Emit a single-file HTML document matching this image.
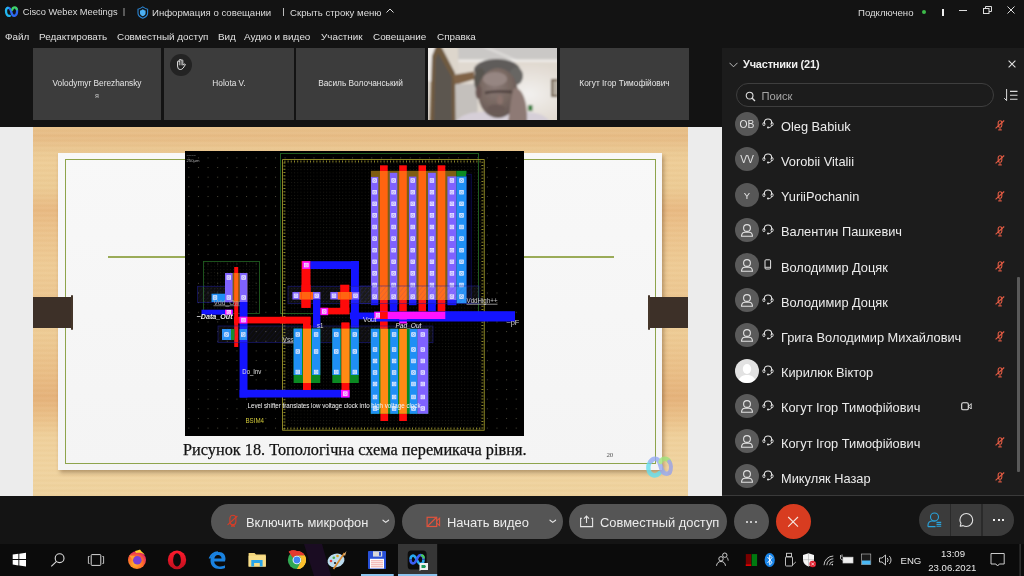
<!DOCTYPE html>
<html><head><meta charset="utf-8">
<style>
*{margin:0;padding:0;box-sizing:border-box}
html,body{will-change:transform;width:1024px;height:576px;overflow:hidden;background:#131313;font-family:"Liberation Sans",sans-serif;color:#e8e8e8}
.a{position:absolute;white-space:nowrap}
.t{font-size:9.6px;color:#dcdcdc;line-height:1}
.menu{font-size:9.9px;color:#e0e0e0;line-height:1}
.tile{position:absolute;top:48px;height:72px;background:#3c3c3c}
.tname{position:absolute;left:0;right:0;top:31px;text-align:center;font-size:8.3px;color:#e6e6e6;line-height:1}
.row{position:absolute;left:722px;width:302px;height:35px}
.av{position:absolute;left:13px;top:5px;width:24px;height:24px;border-radius:50%;background:#5b5b5b;color:#e0e0e0;font-size:10px;text-align:center;line-height:24px}
.nm{position:absolute;left:59px;top:10px;font-size:12.8px;color:#eaeaea;line-height:1;white-space:nowrap}
.btn{position:absolute;top:504px;height:35px;border-radius:18px;background:#555555}
.btxt{position:absolute;top:11px;font-size:12.9px;color:#ececec;line-height:1;white-space:nowrap}
</style></head>
<body>
<!-- title bar -->
<div class="a" style="left:0;top:0;width:1024px;height:48px;background:#131313"></div>
<svg class="a" style="left:4px;top:6px" width="16" height="12" viewBox="4 6 16 12"><path d="M7.6 7.9 C9.4 7.4 10.3 8.6 10.9 10.6 L11.8 13.6 C12.3 15.4 13.2 15.9 14.4 15.8" stroke="#2f6cf4" stroke-width="2.3" fill="none" stroke-linecap="round"/><path d="M14.4 15.8 C16.4 15.5 17.2 13 17.1 10.3 C17 9.3 16.7 8.7 16.2 8.4" stroke="#2d66f0" stroke-width="2.3" fill="none" stroke-linecap="round"/><path d="M12.2 9.8 C12.6 8 13.9 7.3 15.1 7.4 C16 7.5 16.6 8.2 16.8 9.3" stroke="#3ed46a" stroke-width="2.2" fill="none" stroke-linecap="round"/><path d="M9.8 15.8 C7.2 16.3 5.9 13.6 6 10.6 C6.1 8.9 6.8 8 7.8 7.8" stroke="#22b8f0" stroke-width="2.3" fill="none" stroke-linecap="round"/></svg>
<div class="a t" style="left:22.7px;top:8px;font-size:9.3px">Cisco Webex Meetings</div>
<div class="a" style="left:123px;top:8px;width:2px;height:8px;background:#585858"></div>
<svg class="a" style="left:137px;top:5.5px" width="12" height="13" viewBox="0 0 12 13"><path d="M5.8 0.9 C7.5 2.2 9.3 3 10.6 3.2 V7.2 C10.6 9.2 8.6 11.2 5.8 12.2 C3 11.2 1 9.2 1 7.2 V3.2 C2.3 3 4.1 2.2 5.8 0.9 Z" stroke="#2a86d6" stroke-width="1.1" fill="none"/><path d="M5.8 3.2 C6.9 4 8 4.5 8.6 4.6 V7.2 C8.6 8.5 7.4 9.6 5.8 10.2 C4.2 9.6 3 8.5 3 7.2 V4.6 C3.6 4.5 4.7 4 5.8 3.2 Z" fill="#4cb0f4"/></svg>
<div class="a t" style="left:152px;top:8px">Информация о совещании</div>
<div class="a" style="left:283px;top:8px;width:1px;height:8px;background:#bbb"></div>
<div class="a t" style="left:290px;top:8px">Скрыть строку меню</div>
<svg class="a" style="left:386px;top:8px" width="8" height="5" viewBox="0 0 8 5"><path d="M0.5 4.5 L4 1 L7.5 4.5" stroke="#ddd" stroke-width="1" fill="none"/></svg>
<div class="a t" style="left:858px;top:8px">Подключено</div>
<div class="a" style="left:922px;top:10px;width:4px;height:4px;border-radius:50%;background:#3dbb4a"></div>
<div class="a" style="left:942px;top:9px;width:2px;height:7px;background:#eee"></div>
<div class="a" style="left:959px;top:10px;width:8px;height:1px;background:#ddd"></div>
<svg class="a" style="left:983px;top:6px" width="9" height="8" viewBox="0 0 9 8"><rect x="0.5" y="2.5" width="5.5" height="5" fill="none" stroke="#ddd" stroke-width="1"/><path d="M2.5 2.5 V0.5 H8.5 V5.5 H6" fill="none" stroke="#ddd" stroke-width="1"/></svg>
<svg class="a" style="left:1007px;top:6.2px" width="8" height="8" viewBox="0 0 8 8"><path d="M0.5 0.5 L7.5 7.5 M7.5 0.5 L0.5 7.5" stroke="#ddd" stroke-width="1"/></svg>

<!-- menu -->
<div class="a menu" style="left:5px;top:32px">Файл</div>
<div class="a menu" style="left:39px;top:32px">Редактировать</div>
<div class="a menu" style="left:117px;top:32px">Совместный доступ</div>
<div class="a menu" style="left:218px;top:32px">Вид</div>
<div class="a menu" style="left:244px;top:32px">Аудио и видео</div>
<div class="a menu" style="left:321px;top:32px">Участник</div>
<div class="a menu" style="left:373px;top:32px">Совещание</div>
<div class="a menu" style="left:437px;top:32px">Справка</div>

<!-- tiles -->
<div class="tile" style="left:33px;width:128px"><div class="tname">Volodymyr Berezhansky</div><div class="tname" style="top:44px;font-size:7.2px;color:#c8c8c8">я</div></div>
<div class="tile" style="left:164px;width:130px"><div class="tname">Holota V.</div>
  <div class="a" style="left:6.2px;top:5.9px;width:21.8px;height:21.8px;border-radius:50%;background:#232323"></div>
  <svg class="a" style="left:11.5px;top:11.4px" width="10" height="11" viewBox="0 0 10 11"><path d="M1.5 7 V3 Q1.5 2 2.4 2 Q3.3 2 3.3 3 V1.2 Q3.3 0.4 4.2 0.4 Q5.1 0.4 5.1 1.2 V1.5 Q5.1 0.8 5.95 0.8 Q6.8 0.8 6.8 1.6 V6.2 L8 5.2 Q9.2 4.5 9.4 5.6 L7.2 9 Q6 10.6 4.2 10.6 Q1.5 10.6 1.5 7 Z" stroke="#e2e2e2" stroke-width="0.95" fill="none" stroke-linejoin="round"/><path d="M3.3 3 V6.3 M5.1 1.5 V6.3" stroke="#e2e2e2" stroke-width="0.8"/></svg>
</div>
<div class="tile" style="left:296px;width:129px"><div class="tname">Василь Волочанський</div></div>
<svg class="a" style="left:428px;top:48px" width="129" height="72" viewBox="0 0 129 72">
<defs><filter id="bl" x="0" y="0" width="100%" height="100%"><feGaussianBlur stdDeviation="0.9"/></filter>
<radialGradient id="face" cx="0.42" cy="0.35" r="0.7"><stop offset="0" stop-color="#8a7a76"/><stop offset="0.6" stop-color="#76665f"/><stop offset="1" stop-color="#615452"/></radialGradient>
<radialGradient id="wall" cx="0.7" cy="0.55" r="0.5"><stop offset="0" stop-color="#f2f0ee"/><stop offset="1" stop-color="#e0d9d0"/></radialGradient>
</defs>
<rect x="0" y="0" width="129" height="72" fill="#d6d0c8"/>
<g filter="url(#bl)">
<rect x="28" y="12" width="103" height="62" fill="url(#wall)"/>
<rect x="-2" y="-2" width="133" height="14" fill="#cac8c6"/>
<path d="M52 -2 L58 -2 L90 12 L84 12 Z" fill="#dcdad8"/>
<rect x="30" y="11.5" width="101" height="2.5" fill="#eeebe8"/>
<rect x="-2" y="-2" width="12" height="35" fill="#eeebe8"/>
<path d="M12 -2 L30 -2 L31 28 L25 28 Z" fill="#ddd6cc"/>
<path d="M2 74 L4 8 L8 -2 L13 -2 L27 25 L28 74 Z" fill="#705a40"/>
<path d="M6 74 L7.5 12 L10 5 L23.5 29 L24 74 Z" fill="#5c5650"/>
<path d="M25 27 L46 23.5 L47 31 L27 37 Z" fill="#806446"/>
<rect x="27.5" y="36" width="22" height="38" fill="#c4c0bc"/>
<rect x="123" y="31" width="7" height="18" fill="#6e5c44"/>
<rect x="125" y="33" width="5" height="14" fill="#b4aca0"/>
<path d="M28 74 C32 67 42 64 55 64 L100 64 C112 65 118 68 122 74 Z" fill="#d6cfd8"/>
<ellipse cx="69" cy="22" rx="23" ry="11" fill="#5e5c5a"/>
<ellipse cx="88" cy="28" rx="7" ry="9" fill="#686664"/>
<ellipse cx="52" cy="32" rx="6" ry="12" fill="#58544f"/>
<ellipse cx="70" cy="45" rx="20" ry="25" fill="url(#face)"/>
<ellipse cx="67" cy="31" rx="12" ry="7" fill="#968682"/>
<ellipse cx="50.5" cy="44" rx="3" ry="7" fill="#6a5652"/>
<path d="M57 45 C63 43 73 43 84 44" stroke="#4a3c3a" stroke-width="2.4" fill="none"/>
<ellipse cx="72" cy="52" rx="3" ry="5" fill="#8a726c"/>
<ellipse cx="68" cy="61" rx="9" ry="4.5" fill="#6a5a56"/>
<path d="M86 40 C93 39 100 50 99 74 L80 74 C82 64 82 52 86 40 Z" fill="#8e7a74"/>
<rect x="100" y="57" width="4.5" height="6" fill="#3a8040"/>
</g>
</svg>
<div class="tile" style="left:560px;width:129px"><div class="tname">Когут Ігор Тимофійович</div></div>

<!-- slide area -->
<div class="a" style="left:0;top:127px;width:722px;height:369px;background:#ececec"></div>
<div class="a" style="left:33px;top:127px;width:655px;height:369px;background:repeating-linear-gradient(180deg,rgba(255,255,255,0.03) 0px,rgba(255,255,255,0.03) 2px,rgba(160,100,40,0.03) 3px,rgba(160,100,40,0.0) 5px),linear-gradient(180deg,#e8c28c 0px,#e6bb84 9px,#e8c08a 15px,#ebc993 25px,#eecd97 35px,#eccb94 60px,#e8b982 83px,#ebc18a 100px,#eecb95 140px,#ecc690 170px,#eecd97 200px,#e9bd85 247px,#e5b27a 270px,#eac088 290px,#efd09b 310px,#f0d39f 340px,#eed29d 368px)"></div>
<div class="a" style="left:58px;top:153px;width:604px;height:317px;background:linear-gradient(180deg,#f8f8f8,#f4f4f4);box-shadow:2px 3px 4px rgba(80,50,20,.35)"></div>
<div class="a" style="left:64.8px;top:159px;width:591px;height:304.5px;border:1.5px solid #8ea44c"></div>
<div class="a" style="left:108px;top:256px;width:78px;height:2px;background:#9aab58"></div>
<div class="a" style="left:524px;top:256px;width:90px;height:2px;background:#9aab58"></div>
<div class="a" style="left:33px;top:297px;width:40px;height:31px;background:#3d3028"></div><div class="a" style="left:71px;top:295px;width:2.4px;height:35px;border-radius:1.2px;background:#45362a"></div>
<div class="a" style="left:648px;top:297px;width:40px;height:31px;background:#3d3028"></div><div class="a" style="left:647.6px;top:295px;width:2.4px;height:35px;border-radius:1.2px;background:#45362a"></div>
<svg class="a" style="left:185px;top:151px" width="339" height="285" viewBox="185 151 339 285"><defs>
<pattern id="gd" x="188.3" y="157.4" width="9.63" height="9.65" patternUnits="userSpaceOnUse"><rect x="0" y="0" width="1" height="1" fill="#4a4738"/></pattern>
<pattern id="gf" x="284.5" y="166" width="3.21" height="3.216" patternUnits="userSpaceOnUse"><rect x="0" y="0" width="0.9" height="0.9" fill="#1c1b15"/></pattern>
<pattern id="hat" width="3.5" height="3.5" patternUnits="userSpaceOnUse" patternTransform="rotate(40)"><rect width="3.5" height="3.5" fill="rgba(255,255,255,0.05)"/><rect width="0.9" height="3.5" fill="rgba(40,40,170,0.11)"/></pattern>
<g id="ct"><rect x="0.2" y="0.2" width="3.6" height="3.6" fill="rgba(255,255,255,0.35)" stroke="#ececff" stroke-width="0.8"/><path d="M0.8 0.8 L3.2 3.2 M3.2 0.8 L0.8 3.2" stroke="#f0f0ff" stroke-width="0.6"/></g>
</defs><rect x="185" y="151" width="339" height="285" fill="#000"/><rect x="185" y="151" width="339" height="285" fill="url(#gd)"/><rect x="284" y="162" width="198" height="266" fill="#000"/><rect x="284" y="162" width="198" height="266" fill="url(#gf)"/><rect x="280.5" y="153.5" width="198" height="160" fill="none" stroke="#1f5a1f" stroke-width="1"/><rect x="282.6" y="159.6" width="201.6" height="270.6" fill="none" stroke="#b0a830" stroke-width="0.8"/><rect x="284.4" y="161.4" width="198" height="267" fill="none" stroke="#8a8428" stroke-width="2" stroke-dasharray="1 2.2"/><rect x="370.9" y="170.8" width="85.5" height="129.2" fill="#7e5e12" /><rect x="456.4" y="170.8" width="10.1" height="5.6" fill="#0b8a22" /><rect x="466.5" y="174.3" width="4.8" height="129.1" fill="#020214" stroke="#0c0c50" stroke-width="0.8"/><rect x="380.0" y="165.3" width="7.7" height="5.7" fill="#ff0a0a" /><rect x="380.0" y="171.0" width="7.7" height="129.0" fill="#ff6410" /><rect x="399.2" y="165.3" width="7.6" height="5.7" fill="#ff0a0a" /><rect x="399.2" y="171.0" width="7.6" height="129.0" fill="#ff6410" /><rect x="418.5" y="165.3" width="7.5" height="5.7" fill="#ff0a0a" /><rect x="418.5" y="171.0" width="7.5" height="129.0" fill="#ff6410" /><rect x="437.6" y="165.3" width="7.7" height="5.7" fill="#ff0a0a" /><rect x="437.6" y="171.0" width="7.7" height="129.0" fill="#ff6410" /><rect x="370.9" y="176.9" width="7.4" height="123.1" fill="#7f62ff" /><rect x="389.8" y="172.8" width="7.5" height="127.2" fill="#7f62ff" /><rect x="409.0" y="176.6" width="7.4" height="123.4" fill="#7f62ff" /><rect x="428.0" y="172.8" width="7.8" height="127.2" fill="#7f62ff" /><rect x="447.4" y="176.4" width="9.0" height="123.6" fill="#7f62ff" /><rect x="456.4" y="176.4" width="10.1" height="127.0" fill="#1f8ff5" /><use href="#ct" x="372.6" y="178.5"/><use href="#ct" x="372.6" y="190.2"/><use href="#ct" x="372.6" y="201.8"/><use href="#ct" x="372.6" y="213.4"/><use href="#ct" x="372.6" y="225.0"/><use href="#ct" x="372.6" y="236.6"/><use href="#ct" x="372.6" y="248.2"/><use href="#ct" x="372.6" y="259.8"/><use href="#ct" x="372.6" y="271.4"/><use href="#ct" x="372.6" y="283.0"/><use href="#ct" x="372.6" y="294.6"/><use href="#ct" x="391.6" y="178.5"/><use href="#ct" x="391.6" y="190.2"/><use href="#ct" x="391.6" y="201.8"/><use href="#ct" x="391.6" y="213.4"/><use href="#ct" x="391.6" y="225.0"/><use href="#ct" x="391.6" y="236.6"/><use href="#ct" x="391.6" y="248.2"/><use href="#ct" x="391.6" y="259.8"/><use href="#ct" x="391.6" y="271.4"/><use href="#ct" x="391.6" y="283.0"/><use href="#ct" x="391.6" y="294.6"/><use href="#ct" x="410.7" y="178.5"/><use href="#ct" x="410.7" y="190.2"/><use href="#ct" x="410.7" y="201.8"/><use href="#ct" x="410.7" y="213.4"/><use href="#ct" x="410.7" y="225.0"/><use href="#ct" x="410.7" y="236.6"/><use href="#ct" x="410.7" y="248.2"/><use href="#ct" x="410.7" y="259.8"/><use href="#ct" x="410.7" y="271.4"/><use href="#ct" x="410.7" y="283.0"/><use href="#ct" x="410.7" y="294.6"/><use href="#ct" x="429.9" y="178.5"/><use href="#ct" x="429.9" y="190.2"/><use href="#ct" x="429.9" y="201.8"/><use href="#ct" x="429.9" y="213.4"/><use href="#ct" x="429.9" y="225.0"/><use href="#ct" x="429.9" y="236.6"/><use href="#ct" x="429.9" y="248.2"/><use href="#ct" x="429.9" y="259.8"/><use href="#ct" x="429.9" y="271.4"/><use href="#ct" x="429.9" y="283.0"/><use href="#ct" x="429.9" y="294.6"/><use href="#ct" x="449.9" y="178.5"/><use href="#ct" x="449.9" y="190.2"/><use href="#ct" x="449.9" y="201.8"/><use href="#ct" x="449.9" y="213.4"/><use href="#ct" x="449.9" y="225.0"/><use href="#ct" x="449.9" y="236.6"/><use href="#ct" x="449.9" y="248.2"/><use href="#ct" x="449.9" y="259.8"/><use href="#ct" x="449.9" y="271.4"/><use href="#ct" x="449.9" y="283.0"/><use href="#ct" x="449.9" y="294.6"/><use href="#ct" x="459.5" y="178.5"/><use href="#ct" x="459.5" y="190.2"/><use href="#ct" x="459.5" y="201.8"/><use href="#ct" x="459.5" y="213.4"/><use href="#ct" x="459.5" y="225.0"/><use href="#ct" x="459.5" y="236.6"/><use href="#ct" x="459.5" y="248.2"/><use href="#ct" x="459.5" y="259.8"/><use href="#ct" x="459.5" y="271.4"/><use href="#ct" x="459.5" y="283.0"/><use href="#ct" x="459.5" y="294.6"/><rect x="370.9" y="300.0" width="7.4" height="5.2" fill="#1414ff" /><rect x="389.8" y="300.0" width="7.5" height="5.2" fill="#1414ff" /><rect x="409.0" y="300.0" width="7.4" height="5.2" fill="#1414ff" /><rect x="428.0" y="300.0" width="7.8" height="5.2" fill="#1414ff" /><rect x="447.4" y="300.0" width="9.0" height="5.2" fill="#1414ff" /><rect x="389.8" y="300.0" width="7.5" height="11.2" fill="#1414ff" /><rect x="428.0" y="300.0" width="7.8" height="11.2" fill="#1414ff" /><rect x="380.0" y="300.0" width="7.7" height="30.0" fill="#ff0a0a" /><rect x="399.2" y="300.0" width="7.6" height="11.5" fill="#ff0a0a" /><rect x="418.5" y="300.0" width="7.5" height="11.5" fill="#ff0a0a" /><rect x="437.6" y="300.0" width="7.7" height="11.5" fill="#ff0a0a" /><rect x="350.0" y="312.5" width="24.2" height="6.8" fill="#1414ff" /><rect x="374.2" y="311.7" width="70.8" height="9.0" fill="#1414ff" /><rect x="445.0" y="311.2" width="70.0" height="9.5" fill="#1414ff" /><rect x="374.2" y="311.7" width="71.1" height="7.3" fill="#ff12ff" /><use href="#ct" x="376.0" y="313.3"/><rect x="380.0" y="311.7" width="7.7" height="7.3" fill="#ff0a0a" /><rect x="360.0" y="286.0" width="119.0" height="17.6" fill="url(#hat)" stroke="rgba(30,30,160,0.6)" stroke-width="0.8"/><rect x="203.5" y="261.5" width="56.0" height="52.0" fill="url(#gf)" stroke="#1f5a1f" stroke-width="0.9"/><rect x="197.4" y="286.3" width="40.6" height="16.2" fill="url(#hat)" stroke="rgba(30,30,160,0.6)" stroke-width="0.8"/><rect x="225.0" y="273.0" width="22.4" height="29.0" fill="#7e5e12" /><rect x="225.0" y="273.0" width="7.6" height="29.0" fill="#7f62ff" /><rect x="239.8" y="273.0" width="7.6" height="29.0" fill="#7f62ff" /><rect x="211.5" y="293.7" width="13.5" height="8.3" fill="#1f8ff5" /><rect x="234.2" y="267.0" width="4.0" height="80.0" fill="#ff0a0a" /><rect x="234.2" y="273.0" width="4.0" height="29.0" fill="#ff6410" /><use href="#ct" x="226.8" y="275.5"/><use href="#ct" x="241.6" y="275.5"/><use href="#ct" x="226.8" y="295.5"/><use href="#ct" x="241.6" y="295.5"/><use href="#ct" x="213.0" y="295.5"/><rect x="239.6" y="302.0" width="7.9" height="95.5" fill="#1414ff" /><rect x="201.5" y="309.7" width="31.5" height="5.0" fill="#1414ff" /><rect x="225.0" y="309.7" width="7.5" height="5.0" fill="#ff12ff" /><use href="#ct" x="226.8" y="310.2"/><rect x="234.0" y="316.8" width="69.0" height="6.6" fill="#ff0a0a" /><rect x="239.5" y="316.8" width="7.9" height="6.6" fill="#ff12ff" /><use href="#ct" x="241.5" y="318.1"/><rect x="239.6" y="389.8" width="110.0" height="7.7" fill="#1414ff" /><rect x="341.0" y="389.8" width="8.6" height="7.7" fill="#ff12ff" /><use href="#ct" x="343.3" y="391.6"/><rect x="222.0" y="329.0" width="12.5" height="11.0" fill="#0b8a22" /><rect x="222.0" y="329.0" width="9.0" height="11.0" fill="#1f8ff5" /><rect x="239.5" y="329.0" width="7.5" height="11.0" fill="#1f8ff5" /><use href="#ct" x="224.5" y="332.5"/><use href="#ct" x="241.3" y="332.5"/><rect x="301.5" y="261.0" width="9.0" height="46.8" fill="#ff0a0a" /><rect x="302.3" y="261.2" width="8.2" height="7.8" fill="#ff12ff" /><use href="#ct" x="304.4" y="263.1"/><rect x="310.5" y="261.2" width="48.4" height="7.8" fill="#1414ff" /><rect x="351.0" y="261.0" width="7.9" height="66.6" fill="#1414ff" /><rect x="288.0" y="286.3" width="83.6" height="17.3" fill="url(#hat)" stroke="rgba(30,30,160,0.6)" stroke-width="0.8"/><rect x="292.4" y="292.0" width="28.0" height="7.5" fill="#7f62ff" /><rect x="330.3" y="292.0" width="28.9" height="7.5" fill="#7f62ff" /><rect x="299.5" y="292.0" width="13.5" height="7.5" fill="#ff6410" /><rect x="337.8" y="292.0" width="14.0" height="7.5" fill="#ff6410" /><rect x="301.5" y="284.7" width="9.0" height="23.1" fill="#ff0a0a" /><rect x="301.5" y="292.0" width="9.0" height="7.5" fill="#ff6410" /><rect x="340.2" y="284.7" width="9.1" height="28.8" fill="#ff0a0a" /><rect x="340.2" y="292.0" width="9.1" height="7.5" fill="#ff6410" /><rect x="313.0" y="299.5" width="7.4" height="28.1" fill="#1414ff" /><rect x="320.4" y="307.8" width="28.9" height="6.6" fill="#ff0a0a" /><rect x="320.4" y="307.8" width="7.8" height="7.4" fill="#ff12ff" /><use href="#ct" x="322.3" y="309.5"/><rect x="280.0" y="316.8" width="30.5" height="6.6" fill="#ff0a0a" /><rect x="303.0" y="316.8" width="7.5" height="10.8" fill="#ff0a0a" /><rect x="341.5" y="322.6" width="7.8" height="6.4" fill="#ff0a0a" /><use href="#ct" x="294.0" y="293.8"/><use href="#ct" x="314.7" y="293.8"/><use href="#ct" x="332.0" y="293.8"/><use href="#ct" x="353.5" y="293.8"/><rect x="218.0" y="326.0" width="215.0" height="16.6" fill="url(#hat)" stroke="rgba(30,30,160,0.6)" stroke-width="0.8"/><rect x="293.6" y="328.6" width="26.7" height="54.4" fill="#0b8a22" /><rect x="332.3" y="328.6" width="26.5" height="54.4" fill="#0b8a22" /><rect x="293.6" y="328.6" width="8.4" height="46.4" fill="#1f8ff5" /><use href="#ct" x="295.8" y="332.5"/><use href="#ct" x="295.8" y="349.5"/><use href="#ct" x="295.8" y="370.0"/><rect x="312.0" y="328.6" width="8.3" height="46.4" fill="#1f8ff5" /><use href="#ct" x="314.1" y="332.5"/><use href="#ct" x="314.1" y="349.5"/><use href="#ct" x="314.1" y="370.0"/><rect x="332.3" y="328.6" width="8.0" height="46.4" fill="#1f8ff5" /><use href="#ct" x="334.3" y="332.5"/><use href="#ct" x="334.3" y="349.5"/><use href="#ct" x="334.3" y="370.0"/><rect x="350.8" y="328.6" width="8.0" height="46.4" fill="#1f8ff5" /><use href="#ct" x="352.8" y="332.5"/><use href="#ct" x="352.8" y="349.5"/><use href="#ct" x="352.8" y="370.0"/><rect x="303.0" y="325.0" width="8.0" height="65.0" fill="#ff0a0a" /><rect x="303.0" y="328.6" width="8.0" height="54.4" fill="#ff8a14" /><rect x="341.5" y="322.6" width="7.9" height="67.4" fill="#ff0a0a" /><rect x="341.5" y="328.6" width="7.9" height="54.4" fill="#ff8a14" /><rect x="370.8" y="328.8" width="57.5" height="85.0" fill="#0b8a22" /><rect x="370.8" y="328.8" width="8.4" height="85.0" fill="#1f8ff5" /><rect x="390.2" y="328.8" width="7.8" height="85.0" fill="#1f8ff5" /><rect x="409.6" y="328.8" width="7.7" height="85.0" fill="#1f8ff5" /><rect x="417.3" y="328.8" width="11.0" height="85.0" fill="#7f62ff" /><rect x="380.4" y="413.8" width="7.7" height="7.2" fill="#ff0a0a" /><rect x="380.4" y="328.8" width="7.7" height="85.0" fill="#ff8a14" /><rect x="399.2" y="413.8" width="7.7" height="7.2" fill="#ff0a0a" /><rect x="399.2" y="328.8" width="7.7" height="85.0" fill="#ff8a14" /><rect x="399.2" y="319.5" width="7.7" height="4.0" fill="#ff12ff" /><use href="#ct" x="373.0" y="332.5"/><use href="#ct" x="373.0" y="347.5"/><use href="#ct" x="373.0" y="359.0"/><use href="#ct" x="373.0" y="370.5"/><use href="#ct" x="373.0" y="382.0"/><use href="#ct" x="373.0" y="395.0"/><use href="#ct" x="373.0" y="406.5"/><use href="#ct" x="392.1" y="332.5"/><use href="#ct" x="392.1" y="347.5"/><use href="#ct" x="392.1" y="359.0"/><use href="#ct" x="392.1" y="370.5"/><use href="#ct" x="392.1" y="382.0"/><use href="#ct" x="392.1" y="395.0"/><use href="#ct" x="392.1" y="406.5"/><use href="#ct" x="411.5" y="332.5"/><use href="#ct" x="411.5" y="347.5"/><use href="#ct" x="411.5" y="359.0"/><use href="#ct" x="411.5" y="370.5"/><use href="#ct" x="411.5" y="382.0"/><use href="#ct" x="411.5" y="395.0"/><use href="#ct" x="411.5" y="406.5"/><use href="#ct" x="420.8" y="332.5"/><use href="#ct" x="420.8" y="347.5"/><use href="#ct" x="420.8" y="359.0"/><use href="#ct" x="420.8" y="370.5"/><use href="#ct" x="420.8" y="382.0"/><use href="#ct" x="420.8" y="395.0"/><use href="#ct" x="420.8" y="406.5"/><rect x="370.0" y="320.0" width="145.0" height="1.5" fill="#1414ff" /><text x="196.6" y="319.3" font-family="Liberation Sans" font-size="7" fill="#f0f0f0" font-style="italic" font-weight="bold" textLength="36" lengthAdjust="spacingAndGlyphs">~Data_Out</text><text x="213.5" y="304.5" font-family="Liberation Sans" font-size="6.5" fill="#aaaaaa" textLength="26" lengthAdjust="spacingAndGlyphs" text-decoration="underline">Vdd_Ow</text><text x="363" y="321.5" font-family="Liberation Sans" font-size="7" fill="#dddddd" textLength="13.5" lengthAdjust="spacingAndGlyphs">Vout</text><text x="317" y="327.8" font-family="Liberation Sans" font-size="7" fill="#dddddd" textLength="6.5" lengthAdjust="spacingAndGlyphs">s1</text><text x="282.5" y="341.5" font-family="Liberation Sans" font-size="7.5" fill="#cccccc" textLength="11" lengthAdjust="spacingAndGlyphs" text-decoration="underline">Vss</text><text x="395.4" y="328.2" font-family="Liberation Sans" font-size="7" fill="#e8e8e8" font-style="italic" textLength="26" lengthAdjust="spacingAndGlyphs">Pad_Out</text><text x="466.5" y="302.8" font-family="Liberation Sans" font-size="7" fill="#cccccc" textLength="31" lengthAdjust="spacingAndGlyphs" text-decoration="underline">VddHigh++</text><text x="506.4" y="324.5" font-family="Liberation Sans" font-size="6.5" fill="#cccccc" textLength="13" lengthAdjust="spacingAndGlyphs">~pF</text><text x="242.3" y="373.5" font-family="Liberation Sans" font-size="7" fill="#e0e0e0" textLength="19" lengthAdjust="spacingAndGlyphs">Do_Inv</text><text x="247.5" y="408.2" font-family="Liberation Sans" font-size="7" fill="#f4f4f4" textLength="173" lengthAdjust="spacingAndGlyphs">Level shifter translates low voltage clock into high voltage clock</text><text x="245.4" y="422.5" font-family="Liberation Sans" font-size="7" fill="#d0c838" textLength="18.6" lengthAdjust="spacingAndGlyphs">BSIM4</text><text x="186.5" y="156.5" font-family="Liberation Sans" font-size="4" fill="#cccccc" >~~~~</text><text x="186.5" y="162" font-family="Liberation Sans" font-size="4.2" fill="#aaaaaa" >250µm</text></svg>
<div class="a" style="left:183px;top:441.8px;font-family:'Liberation Serif',serif;font-size:16.3px;color:#111;-webkit-text-stroke:0.25px #111;line-height:1">Рисунок 18. Топологічна схема перемикача рівня.</div>
<div class="a" style="left:606.5px;top:451.5px;font-family:'Liberation Serif',serif;font-size:7px;color:#555;line-height:1;letter-spacing:-0.3px">20</div>
<svg class="a" style="left:644px;top:455px" width="30" height="23" viewBox="0 0 30 23" opacity="0.8"><path d="M15.5 18 C12 22 6 21 4.6 15 C3.8 11 5 7 7.5 6" stroke="#64dff0" stroke-width="4.4" fill="none" stroke-linecap="round"/><path d="M6.5 6.5 C9 2.5 14 2.8 15.5 7.5 L17.5 14 C19 19 23 20 25.5 17.5" stroke="#94aaf4" stroke-width="4.4" fill="none" stroke-linecap="round"/><path d="M16.5 7 C18 3 23.5 2.5 25.5 7" stroke="#9ee47a" stroke-width="4.4" fill="none" stroke-linecap="round"/><path d="M25.2 6.5 C27.5 9 27.5 14.5 25.5 18" stroke="#98a2e8" stroke-width="4" fill="none" stroke-linecap="round"/></svg>

<!-- panel -->
<div class="a" style="left:722px;top:48px;width:302px;height:448px;background:#1c1c1c;overflow:hidden">
<svg class="a" style="left:7px;top:14px" width="9" height="6" viewBox="0 0 9 6"><path d="M0.5 0.8 L4.5 4.8 L8.5 0.8" stroke="#bdbdbd" stroke-width="1" fill="none"/></svg>
<div class="a" style="left:21px;top:10.8px;font-size:11px;font-weight:700;color:#f0f0f0;line-height:1;letter-spacing:-0.2px">Участники (21)</div>
<svg class="a" style="left:285.5px;top:11.5px" width="8" height="8" viewBox="0 0 8 8"><path d="M0.6 0.6 L7.4 7.4 M7.4 0.6 L0.6 7.4" stroke="#e0e0e0" stroke-width="1.1"/></svg>
<div class="a" style="left:14px;top:35.3px;width:258px;height:23.5px;border:1px solid #3e3e3e;border-radius:12px"></div>
<svg class="a" style="left:23px;top:42.5px" width="11" height="11" viewBox="0 0 11 11"><circle cx="4.6" cy="4.6" r="3.4" stroke="#e0e0e0" stroke-width="1.05" fill="none"/><path d="M7.2 7.2 L10 10" stroke="#e0e0e0" stroke-width="1.3"/></svg>
<div class="a" style="left:39.5px;top:42.5px;font-size:11.2px;color:#a6a6a6;line-height:1">Поиск</div>
<svg class="a" style="left:281px;top:40px" width="15" height="14" viewBox="0 0 15 14"><path d="M3.6 1 V12.6 L1.2 10.2" stroke="#dcdcdc" stroke-width="1" fill="none"/><path d="M7 3.4 H14.5 M7 7.3 H14.5 M7 11.2 H14.5" stroke="#dcdcdc" stroke-width="1.1"/></svg>
<div class="a" style="left:13px;top:64.1px;width:24px;height:24px;border-radius:50%;background:#575757;color:#e4e4e4;font-size:10.3px;text-align:center;line-height:26.5px;font-weight:400">OB</div>
<svg class="a" style="left:40px;top:70.1px" width="12" height="11" viewBox="0 0 12 11"><path d="M2.3 6 V4.8 C2.3 2.3 3.9 1 6 1 C8.1 1 9.7 2.3 9.7 4.8 V6" stroke="#e6e6e6" stroke-width="1.1" fill="none"/><rect x="0.9" y="4.6" width="2" height="3" rx="1" stroke="#e6e6e6" stroke-width="0.9" fill="none"/><rect x="9.1" y="4.6" width="2" height="3" rx="1" stroke="#e6e6e6" stroke-width="0.9" fill="none"/><path d="M9.7 7.2 C9.5 8.8 8.3 9.6 6.6 9.6" stroke="#e6e6e6" stroke-width="1" fill="none"/><circle cx="6" cy="9.6" r="1" fill="#e6e6e6"/></svg>
<div class="a" style="left:59px;top:72.8px;font-size:12.8px;color:#ececec;line-height:1">Oleg Babiuk</div>
<svg class="a" style="left:273px;top:72.1px" width="10" height="11" viewBox="0 0 10 11"><rect x="3.2" y="0.8" width="3.6" height="6.4" rx="1.8" stroke="#e45c44" stroke-width="1.1" fill="none"/><path d="M0.6 8.4 L9.2 0.5" stroke="#e45c44" stroke-width="1.1"/><path d="M3.2 9.9 H6.8" stroke="#e45c44" stroke-width="1.1"/><path d="M5 7.6 V9.8" stroke="#e45c44" stroke-width="1"/></svg>
<div class="a" style="left:13px;top:99.3px;width:24px;height:24px;border-radius:50%;background:#575757;color:#e4e4e4;font-size:10.3px;text-align:center;line-height:26.5px;font-weight:400">VV</div>
<svg class="a" style="left:40px;top:105.3px" width="12" height="11" viewBox="0 0 12 11"><path d="M2.3 6 V4.8 C2.3 2.3 3.9 1 6 1 C8.1 1 9.7 2.3 9.7 4.8 V6" stroke="#e6e6e6" stroke-width="1.1" fill="none"/><rect x="0.9" y="4.6" width="2" height="3" rx="1" stroke="#e6e6e6" stroke-width="0.9" fill="none"/><rect x="9.1" y="4.6" width="2" height="3" rx="1" stroke="#e6e6e6" stroke-width="0.9" fill="none"/><path d="M9.7 7.2 C9.5 8.8 8.3 9.6 6.6 9.6" stroke="#e6e6e6" stroke-width="1" fill="none"/><circle cx="6" cy="9.6" r="1" fill="#e6e6e6"/></svg>
<div class="a" style="left:59px;top:108.0px;font-size:12.8px;color:#ececec;line-height:1">Vorobii Vitalii</div>
<svg class="a" style="left:273px;top:107.3px" width="10" height="11" viewBox="0 0 10 11"><rect x="3.2" y="0.8" width="3.6" height="6.4" rx="1.8" stroke="#e45c44" stroke-width="1.1" fill="none"/><path d="M0.6 8.4 L9.2 0.5" stroke="#e45c44" stroke-width="1.1"/><path d="M3.2 9.9 H6.8" stroke="#e45c44" stroke-width="1.1"/><path d="M5 7.6 V9.8" stroke="#e45c44" stroke-width="1"/></svg>
<div class="a" style="left:13px;top:134.5px;width:24px;height:24px;border-radius:50%;background:#575757;color:#e4e4e4;font-size:9.5px;text-align:center;line-height:26.5px;font-weight:400">Y</div>
<svg class="a" style="left:40px;top:140.5px" width="12" height="11" viewBox="0 0 12 11"><path d="M2.3 6 V4.8 C2.3 2.3 3.9 1 6 1 C8.1 1 9.7 2.3 9.7 4.8 V6" stroke="#e6e6e6" stroke-width="1.1" fill="none"/><rect x="0.9" y="4.6" width="2" height="3" rx="1" stroke="#e6e6e6" stroke-width="0.9" fill="none"/><rect x="9.1" y="4.6" width="2" height="3" rx="1" stroke="#e6e6e6" stroke-width="0.9" fill="none"/><path d="M9.7 7.2 C9.5 8.8 8.3 9.6 6.6 9.6" stroke="#e6e6e6" stroke-width="1" fill="none"/><circle cx="6" cy="9.6" r="1" fill="#e6e6e6"/></svg>
<div class="a" style="left:59px;top:143.2px;font-size:12.8px;color:#ececec;line-height:1">YuriiPochanin</div>
<svg class="a" style="left:273px;top:142.5px" width="10" height="11" viewBox="0 0 10 11"><rect x="3.2" y="0.8" width="3.6" height="6.4" rx="1.8" stroke="#e45c44" stroke-width="1.1" fill="none"/><path d="M0.6 8.4 L9.2 0.5" stroke="#e45c44" stroke-width="1.1"/><path d="M3.2 9.9 H6.8" stroke="#e45c44" stroke-width="1.1"/><path d="M5 7.6 V9.8" stroke="#e45c44" stroke-width="1"/></svg>
<div class="a" style="left:13px;top:169.7px;width:24px;height:24px;border-radius:50%;background:#5a5a5a"></div><svg class="a" style="left:13px;top:169.7px" width="24" height="24" viewBox="0 0 24 24"><circle cx="12" cy="10" r="3.4" stroke="#e2e2e2" stroke-width="1.1" fill="none"/><path d="M6.5 18.2 C6.7 15.5 8.5 14.3 10 14.3 H14 C15.5 14.3 17.3 15.5 17.5 18.2 Z" stroke="#e2e2e2" stroke-width="1.1" fill="none" stroke-linejoin="round"/></svg>
<svg class="a" style="left:40px;top:175.7px" width="12" height="11" viewBox="0 0 12 11"><path d="M2.3 6 V4.8 C2.3 2.3 3.9 1 6 1 C8.1 1 9.7 2.3 9.7 4.8 V6" stroke="#e6e6e6" stroke-width="1.1" fill="none"/><rect x="0.9" y="4.6" width="2" height="3" rx="1" stroke="#e6e6e6" stroke-width="0.9" fill="none"/><rect x="9.1" y="4.6" width="2" height="3" rx="1" stroke="#e6e6e6" stroke-width="0.9" fill="none"/><path d="M9.7 7.2 C9.5 8.8 8.3 9.6 6.6 9.6" stroke="#e6e6e6" stroke-width="1" fill="none"/><circle cx="6" cy="9.6" r="1" fill="#e6e6e6"/></svg>
<div class="a" style="left:59px;top:178.4px;font-size:12.8px;color:#ececec;line-height:1">Валентин Пашкевич</div>
<svg class="a" style="left:273px;top:177.7px" width="10" height="11" viewBox="0 0 10 11"><rect x="3.2" y="0.8" width="3.6" height="6.4" rx="1.8" stroke="#e45c44" stroke-width="1.1" fill="none"/><path d="M0.6 8.4 L9.2 0.5" stroke="#e45c44" stroke-width="1.1"/><path d="M3.2 9.9 H6.8" stroke="#e45c44" stroke-width="1.1"/><path d="M5 7.6 V9.8" stroke="#e45c44" stroke-width="1"/></svg>
<div class="a" style="left:13px;top:204.9px;width:24px;height:24px;border-radius:50%;background:#5a5a5a"></div><svg class="a" style="left:13px;top:204.9px" width="24" height="24" viewBox="0 0 24 24"><circle cx="12" cy="10" r="3.4" stroke="#e2e2e2" stroke-width="1.1" fill="none"/><path d="M6.5 18.2 C6.7 15.5 8.5 14.3 10 14.3 H14 C15.5 14.3 17.3 15.5 17.5 18.2 Z" stroke="#e2e2e2" stroke-width="1.1" fill="none" stroke-linejoin="round"/></svg>
<svg class="a" style="left:42px;top:211.4px" width="8" height="11" viewBox="0 0 8 11"><rect x="1" y="0.8" width="5.6" height="9.2" rx="1" stroke="#e6e6e6" stroke-width="1" fill="none"/><path d="M1.2 8.3 H6.4" stroke="#e6e6e6" stroke-width="0.9"/></svg>
<div class="a" style="left:59px;top:213.6px;font-size:12.8px;color:#ececec;line-height:1">Володимир Доцяк</div>
<svg class="a" style="left:273px;top:212.9px" width="10" height="11" viewBox="0 0 10 11"><rect x="3.2" y="0.8" width="3.6" height="6.4" rx="1.8" stroke="#e45c44" stroke-width="1.1" fill="none"/><path d="M0.6 8.4 L9.2 0.5" stroke="#e45c44" stroke-width="1.1"/><path d="M3.2 9.9 H6.8" stroke="#e45c44" stroke-width="1.1"/><path d="M5 7.6 V9.8" stroke="#e45c44" stroke-width="1"/></svg>
<div class="a" style="left:13px;top:240.1px;width:24px;height:24px;border-radius:50%;background:#5a5a5a"></div><svg class="a" style="left:13px;top:240.1px" width="24" height="24" viewBox="0 0 24 24"><circle cx="12" cy="10" r="3.4" stroke="#e2e2e2" stroke-width="1.1" fill="none"/><path d="M6.5 18.2 C6.7 15.5 8.5 14.3 10 14.3 H14 C15.5 14.3 17.3 15.5 17.5 18.2 Z" stroke="#e2e2e2" stroke-width="1.1" fill="none" stroke-linejoin="round"/></svg>
<svg class="a" style="left:40px;top:246.1px" width="12" height="11" viewBox="0 0 12 11"><path d="M2.3 6 V4.8 C2.3 2.3 3.9 1 6 1 C8.1 1 9.7 2.3 9.7 4.8 V6" stroke="#e6e6e6" stroke-width="1.1" fill="none"/><rect x="0.9" y="4.6" width="2" height="3" rx="1" stroke="#e6e6e6" stroke-width="0.9" fill="none"/><rect x="9.1" y="4.6" width="2" height="3" rx="1" stroke="#e6e6e6" stroke-width="0.9" fill="none"/><path d="M9.7 7.2 C9.5 8.8 8.3 9.6 6.6 9.6" stroke="#e6e6e6" stroke-width="1" fill="none"/><circle cx="6" cy="9.6" r="1" fill="#e6e6e6"/></svg>
<div class="a" style="left:59px;top:248.8px;font-size:12.8px;color:#ececec;line-height:1">Володимир Доцяк</div>
<svg class="a" style="left:273px;top:248.1px" width="10" height="11" viewBox="0 0 10 11"><rect x="3.2" y="0.8" width="3.6" height="6.4" rx="1.8" stroke="#e45c44" stroke-width="1.1" fill="none"/><path d="M0.6 8.4 L9.2 0.5" stroke="#e45c44" stroke-width="1.1"/><path d="M3.2 9.9 H6.8" stroke="#e45c44" stroke-width="1.1"/><path d="M5 7.6 V9.8" stroke="#e45c44" stroke-width="1"/></svg>
<div class="a" style="left:13px;top:275.3px;width:24px;height:24px;border-radius:50%;background:#5a5a5a"></div><svg class="a" style="left:13px;top:275.3px" width="24" height="24" viewBox="0 0 24 24"><circle cx="12" cy="10" r="3.4" stroke="#e2e2e2" stroke-width="1.1" fill="none"/><path d="M6.5 18.2 C6.7 15.5 8.5 14.3 10 14.3 H14 C15.5 14.3 17.3 15.5 17.5 18.2 Z" stroke="#e2e2e2" stroke-width="1.1" fill="none" stroke-linejoin="round"/></svg>
<svg class="a" style="left:40px;top:281.3px" width="12" height="11" viewBox="0 0 12 11"><path d="M2.3 6 V4.8 C2.3 2.3 3.9 1 6 1 C8.1 1 9.7 2.3 9.7 4.8 V6" stroke="#e6e6e6" stroke-width="1.1" fill="none"/><rect x="0.9" y="4.6" width="2" height="3" rx="1" stroke="#e6e6e6" stroke-width="0.9" fill="none"/><rect x="9.1" y="4.6" width="2" height="3" rx="1" stroke="#e6e6e6" stroke-width="0.9" fill="none"/><path d="M9.7 7.2 C9.5 8.8 8.3 9.6 6.6 9.6" stroke="#e6e6e6" stroke-width="1" fill="none"/><circle cx="6" cy="9.6" r="1" fill="#e6e6e6"/></svg>
<div class="a" style="left:59px;top:284.0px;font-size:12.8px;color:#ececec;line-height:1">Грига Володимир Михайлович</div>
<svg class="a" style="left:273px;top:283.3px" width="10" height="11" viewBox="0 0 10 11"><rect x="3.2" y="0.8" width="3.6" height="6.4" rx="1.8" stroke="#e45c44" stroke-width="1.1" fill="none"/><path d="M0.6 8.4 L9.2 0.5" stroke="#e45c44" stroke-width="1.1"/><path d="M3.2 9.9 H6.8" stroke="#e45c44" stroke-width="1.1"/><path d="M5 7.6 V9.8" stroke="#e45c44" stroke-width="1"/></svg>
<svg class="a" style="left:13px;top:310.5px" width="24" height="24" viewBox="0 0 24 24"><defs><clipPath id="cw"><circle cx="12" cy="12" r="12"/></clipPath></defs><circle cx="12" cy="12" r="12" fill="#e2e2e2"/><g clip-path="url(#cw)" fill="#ffffff"><ellipse cx="12" cy="10" rx="4.2" ry="5"/><path d="M2 26 C3 18 8 16 12 16 C16 16 21 18 22 26 Z"/></g></svg>
<svg class="a" style="left:40px;top:316.5px" width="12" height="11" viewBox="0 0 12 11"><path d="M2.3 6 V4.8 C2.3 2.3 3.9 1 6 1 C8.1 1 9.7 2.3 9.7 4.8 V6" stroke="#e6e6e6" stroke-width="1.1" fill="none"/><rect x="0.9" y="4.6" width="2" height="3" rx="1" stroke="#e6e6e6" stroke-width="0.9" fill="none"/><rect x="9.1" y="4.6" width="2" height="3" rx="1" stroke="#e6e6e6" stroke-width="0.9" fill="none"/><path d="M9.7 7.2 C9.5 8.8 8.3 9.6 6.6 9.6" stroke="#e6e6e6" stroke-width="1" fill="none"/><circle cx="6" cy="9.6" r="1" fill="#e6e6e6"/></svg>
<div class="a" style="left:59px;top:319.2px;font-size:12.8px;color:#ececec;line-height:1">Кирилюк Віктор</div>
<svg class="a" style="left:273px;top:318.5px" width="10" height="11" viewBox="0 0 10 11"><rect x="3.2" y="0.8" width="3.6" height="6.4" rx="1.8" stroke="#e45c44" stroke-width="1.1" fill="none"/><path d="M0.6 8.4 L9.2 0.5" stroke="#e45c44" stroke-width="1.1"/><path d="M3.2 9.9 H6.8" stroke="#e45c44" stroke-width="1.1"/><path d="M5 7.6 V9.8" stroke="#e45c44" stroke-width="1"/></svg>
<div class="a" style="left:13px;top:345.7px;width:24px;height:24px;border-radius:50%;background:#5a5a5a"></div><svg class="a" style="left:13px;top:345.7px" width="24" height="24" viewBox="0 0 24 24"><circle cx="12" cy="10" r="3.4" stroke="#e2e2e2" stroke-width="1.1" fill="none"/><path d="M6.5 18.2 C6.7 15.5 8.5 14.3 10 14.3 H14 C15.5 14.3 17.3 15.5 17.5 18.2 Z" stroke="#e2e2e2" stroke-width="1.1" fill="none" stroke-linejoin="round"/></svg>
<svg class="a" style="left:40px;top:351.7px" width="12" height="11" viewBox="0 0 12 11"><path d="M2.3 6 V4.8 C2.3 2.3 3.9 1 6 1 C8.1 1 9.7 2.3 9.7 4.8 V6" stroke="#e6e6e6" stroke-width="1.1" fill="none"/><rect x="0.9" y="4.6" width="2" height="3" rx="1" stroke="#e6e6e6" stroke-width="0.9" fill="none"/><rect x="9.1" y="4.6" width="2" height="3" rx="1" stroke="#e6e6e6" stroke-width="0.9" fill="none"/><path d="M9.7 7.2 C9.5 8.8 8.3 9.6 6.6 9.6" stroke="#e6e6e6" stroke-width="1" fill="none"/><circle cx="6" cy="9.6" r="1" fill="#e6e6e6"/></svg>
<div class="a" style="left:59px;top:354.4px;font-size:12.8px;color:#ececec;line-height:1">Когут Ігор Тимофійович</div>
<svg class="a" style="left:239px;top:354.2px" width="11" height="9" viewBox="0 0 11 9"><rect x="0.7" y="0.8" width="6.6" height="7" rx="1.4" stroke="#e8e8e8" stroke-width="1.1" fill="none"/><path d="M7.5 4.3 L10.2 1.6 V7 Z" stroke="#e8e8e8" stroke-width="0.9" fill="none"/></svg>
<div class="a" style="left:13px;top:380.9px;width:24px;height:24px;border-radius:50%;background:#5a5a5a"></div><svg class="a" style="left:13px;top:380.9px" width="24" height="24" viewBox="0 0 24 24"><circle cx="12" cy="10" r="3.4" stroke="#e2e2e2" stroke-width="1.1" fill="none"/><path d="M6.5 18.2 C6.7 15.5 8.5 14.3 10 14.3 H14 C15.5 14.3 17.3 15.5 17.5 18.2 Z" stroke="#e2e2e2" stroke-width="1.1" fill="none" stroke-linejoin="round"/></svg>
<svg class="a" style="left:40px;top:386.9px" width="12" height="11" viewBox="0 0 12 11"><path d="M2.3 6 V4.8 C2.3 2.3 3.9 1 6 1 C8.1 1 9.7 2.3 9.7 4.8 V6" stroke="#e6e6e6" stroke-width="1.1" fill="none"/><rect x="0.9" y="4.6" width="2" height="3" rx="1" stroke="#e6e6e6" stroke-width="0.9" fill="none"/><rect x="9.1" y="4.6" width="2" height="3" rx="1" stroke="#e6e6e6" stroke-width="0.9" fill="none"/><path d="M9.7 7.2 C9.5 8.8 8.3 9.6 6.6 9.6" stroke="#e6e6e6" stroke-width="1" fill="none"/><circle cx="6" cy="9.6" r="1" fill="#e6e6e6"/></svg>
<div class="a" style="left:59px;top:389.6px;font-size:12.8px;color:#ececec;line-height:1">Когут Ігор Тимофійович</div>
<svg class="a" style="left:273px;top:388.9px" width="10" height="11" viewBox="0 0 10 11"><rect x="3.2" y="0.8" width="3.6" height="6.4" rx="1.8" stroke="#e45c44" stroke-width="1.1" fill="none"/><path d="M0.6 8.4 L9.2 0.5" stroke="#e45c44" stroke-width="1.1"/><path d="M3.2 9.9 H6.8" stroke="#e45c44" stroke-width="1.1"/><path d="M5 7.6 V9.8" stroke="#e45c44" stroke-width="1"/></svg>
<div class="a" style="left:13px;top:416.1px;width:24px;height:24px;border-radius:50%;background:#5a5a5a"></div><svg class="a" style="left:13px;top:416.1px" width="24" height="24" viewBox="0 0 24 24"><circle cx="12" cy="10" r="3.4" stroke="#e2e2e2" stroke-width="1.1" fill="none"/><path d="M6.5 18.2 C6.7 15.5 8.5 14.3 10 14.3 H14 C15.5 14.3 17.3 15.5 17.5 18.2 Z" stroke="#e2e2e2" stroke-width="1.1" fill="none" stroke-linejoin="round"/></svg>
<svg class="a" style="left:40px;top:422.1px" width="12" height="11" viewBox="0 0 12 11"><path d="M2.3 6 V4.8 C2.3 2.3 3.9 1 6 1 C8.1 1 9.7 2.3 9.7 4.8 V6" stroke="#e6e6e6" stroke-width="1.1" fill="none"/><rect x="0.9" y="4.6" width="2" height="3" rx="1" stroke="#e6e6e6" stroke-width="0.9" fill="none"/><rect x="9.1" y="4.6" width="2" height="3" rx="1" stroke="#e6e6e6" stroke-width="0.9" fill="none"/><path d="M9.7 7.2 C9.5 8.8 8.3 9.6 6.6 9.6" stroke="#e6e6e6" stroke-width="1" fill="none"/><circle cx="6" cy="9.6" r="1" fill="#e6e6e6"/></svg>
<div class="a" style="left:59px;top:424.8px;font-size:12.8px;color:#ececec;line-height:1">Микуляк Назар</div>
<svg class="a" style="left:273px;top:424.1px" width="10" height="11" viewBox="0 0 10 11"><rect x="3.2" y="0.8" width="3.6" height="6.4" rx="1.8" stroke="#e45c44" stroke-width="1.1" fill="none"/><path d="M0.6 8.4 L9.2 0.5" stroke="#e45c44" stroke-width="1.1"/><path d="M3.2 9.9 H6.8" stroke="#e45c44" stroke-width="1.1"/><path d="M5 7.6 V9.8" stroke="#e45c44" stroke-width="1"/></svg>
<div class="a" style="left:295px;top:229px;width:2.5px;height:195px;background:#5a5a5a;border-radius:1px"></div>
<div class="a" style="left:0;top:446.5px;width:302px;height:1px;background:#3a3a3a"></div>
</div>

<!-- bottom bar -->
<div class="a" style="left:0;top:496px;width:1024px;height:48px;background:#141414"></div>
<div class="btn" style="left:211px;width:184px"><div class="btxt" style="left:35px;top:13px">Включить микрофон</div></div>
<svg class="a" style="left:226px;top:514px" width="13" height="14" viewBox="0 0 13 14"><rect x="3.9" y="1.2" width="6" height="9.6" rx="3" stroke="#d93d27" stroke-width="1.1" fill="none"/><path d="M1.6 10.9 L11.4 2.0" stroke="#d93d27" stroke-width="1.1"/><path d="M5 12.2 L9 12.2 L7 11 Z" fill="#d93d27" stroke="#d93d27" stroke-width="0.8"/></svg>
<svg class="a" style="left:381px;top:518px" width="10" height="7" viewBox="0 0 10 7"><path d="M2 2.2 L4.7 4.4 L7.6 2.2" stroke="#e6e6e6" stroke-width="1.1" fill="none" stroke-linecap="round"/></svg>
<div class="btn" style="left:402px;width:161px"><div class="btxt" style="left:45px;top:13px">Начать видео</div></div>
<svg class="a" style="left:426px;top:516px" width="15" height="12" viewBox="0 0 15 12"><rect x="1.1" y="1.3" width="9.6" height="9.2" stroke="#e0533d" stroke-width="1.2" fill="none"/><path d="M10.7 4.8 L13.6 2.2 V9.6 L10.7 7.2" stroke="#e0533d" stroke-width="1.1" fill="none"/><path d="M1.3 10.5 L10.3 1.5" stroke="#e0533d" stroke-width="1.1"/></svg>
<svg class="a" style="left:548px;top:518px" width="10" height="7" viewBox="0 0 10 7"><path d="M2 2.2 L4.7 4.4 L7.6 2.2" stroke="#e6e6e6" stroke-width="1.1" fill="none" stroke-linecap="round"/></svg>
<div class="btn" style="left:569px;width:158px"><div class="btxt" style="left:31px;top:13px">Совместный доступ</div></div>
<svg class="a" style="left:579px;top:515px" width="15" height="13" viewBox="0 0 15 13"><path d="M3 3.2 H1.6 V11.6 H13.6 V3.2 H12.2" stroke="#e4e4e4" stroke-width="1.1" fill="none"/><path d="M7.5 8 V1.2 M5 3.6 L7.5 1.1 L10 3.6" stroke="#e4e4e4" stroke-width="1.1" fill="none"/></svg>
<div class="btn" style="left:734px;width:35px;border-radius:50%"></div>
<div class="a" style="left:745.6px;top:520.6px;width:2px;height:2px;border-radius:1px;background:#eee"></div>
<div class="a" style="left:750.4px;top:520.6px;width:2px;height:2px;border-radius:1px;background:#eee"></div>
<div class="a" style="left:755.2px;top:520.6px;width:2px;height:2px;border-radius:1px;background:#eee"></div>
<div class="btn" style="left:775.5px;width:35px;border-radius:50%;background:#d83c20"></div>
<svg class="a" style="left:787px;top:516px" width="12" height="12" viewBox="0 0 12 12"><path d="M1.2 1 L11 10.6 M11 1 L1.2 10.6" stroke="#f4e6e0" stroke-width="1.1"/></svg>
<div class="a" style="left:918.6px;top:504px;width:95.6px;height:32px;border-radius:16px;background:#3b3b3b;overflow:hidden">
  <div class="a" style="left:31px;top:0;width:1.4px;height:32px;background:#2a2a2a"></div>
  <div class="a" style="left:62.8px;top:0;width:1.4px;height:32px;background:#2a2a2a"></div>
</div>
<svg class="a" style="left:926px;top:511px" width="17" height="17" viewBox="0 0 17 17"><circle cx="8.5" cy="6" r="4" stroke="#29a3dc" stroke-width="1.1" fill="none"/><path d="M2 15.7 V14.2 C2 11.6 4 10 6.5 10 H9.5" stroke="#29a3dc" stroke-width="1.1" fill="none"/><path d="M2 15.6 H9.5 M10.5 11.4 H15.2 M10.5 13.4 H15.2 M10.5 15.3 H15.2" stroke="#29a3dc" stroke-width="1.1"/></svg>
<svg class="a" style="left:958px;top:512px" width="16" height="16" viewBox="0 0 16 16"><path d="M2.2 14.2 L3 11.2 C2.3 10.2 1.9 9.1 1.9 8 C1.9 4.4 4.8 1.5 8.3 1.5 C11.8 1.5 14.7 4.4 14.7 8 C14.7 11.6 11.8 14.5 8.3 14.5 C7.1 14.5 6 14.2 5.1 13.6 Z" stroke="#e2e2e2" stroke-width="1.1" fill="none" stroke-linejoin="round"/></svg>
<div class="a" style="left:992.5px;top:519px;width:2px;height:2px;background:#eee"></div>
<div class="a" style="left:997.6px;top:519px;width:2px;height:2px;background:#eee"></div>
<div class="a" style="left:1002.2px;top:519px;width:2px;height:2px;background:#eee"></div>

<!-- taskbar -->
<svg class="a" style="left:0;top:544px" width="1024" height="32" viewBox="0 544 1024 32">
<defs>
<radialGradient id="ffg" cx="0.4" cy="0.7" r="0.7"><stop offset="0" stop-color="#ffb82e"/><stop offset="0.6" stop-color="#ff6a2a"/><stop offset="1" stop-color="#e0206a"/></radialGradient>
<linearGradient id="opg" x1="0" y1="0" x2="0" y2="1"><stop offset="0" stop-color="#ff1b2d"/><stop offset="1" stop-color="#c0101e"/></linearGradient>
</defs>
<rect x="0" y="544" width="1024" height="32" fill="#0b0b0b"/>
<path d="M304 544 L322 544 L331 576 L314 576 Z" fill="#1a0c22"/>
<!-- windows -->
<path d="M12.7 554.6 L18.4 553.8 V559.1 H12.7 Z M19.3 553.7 L26 552.8 V559.1 H19.3 Z M12.7 560 H18.4 V565.4 L12.7 564.6 Z M19.3 560 H26 V566.4 L19.3 565.5 Z" fill="#ffffff"/>
<!-- search -->
<circle cx="59.6" cy="558.2" r="4.4" stroke="#dcdcdc" stroke-width="1.1" fill="none"/>
<path d="M56.5 561.4 L51.3 566.3" stroke="#dcdcdc" stroke-width="1.1"/>
<!-- task view -->
<rect x="91.2" y="554.6" width="9.6" height="10.8" rx="0.8" stroke="#d8d8d8" stroke-width="1" fill="none"/>
<path d="M89.6 556.5 H88.4 V563.4 H89.6 M102.4 556.5 H103.6 V563.4 H102.4" stroke="#d8d8d8" stroke-width="0.9" fill="none"/>
<!-- firefox -->
<circle cx="137" cy="560" r="9" fill="url(#ffg)"/>
<path d="M135 551 C138 550 140 549.8 140 549.5 C141.5 552 144 553 145 555 C142 552.5 139 552.5 136 553 Z" fill="#ffd02a"/>
<circle cx="137.3" cy="560.3" r="4.3" fill="#7a3fd8"/>
<path d="M129 555 C131 556 133 555.5 135 556 C134 557.5 133 558.5 132.5 560 Z" fill="#ffa030"/>
<!-- opera -->
<ellipse cx="177" cy="559.9" rx="9.2" ry="9.3" fill="url(#opg)"/>
<ellipse cx="177" cy="559.9" rx="3.9" ry="6.6" fill="#0b0b0b"/>
<!-- edge -->
<path d="M225 561.5 H214.2 C214.6 565 217.5 566.5 220.5 566.5 C222.5 566.5 224 566 225 565.3 V568 C223.5 568.7 221.8 569 219.7 569 C214 569 210.5 565.5 210.5 560.5 C210.5 555 214.3 552 219 552 C223.5 552 225.5 555 225.5 559 Z M214.3 558.6 H221.6 C221.5 556.2 220 555 218 555 C216 555 214.6 556.5 214.3 558.6 Z" fill="#1a82e0"/>
<path d="M209.5 558.5 C211 554.5 214 552.3 218 552.1" stroke="#1a82e0" stroke-width="1.8" fill="none"/>
<!-- explorer -->
<path d="M248.6 553 H254.5 L256 554.5 H265.8 V566.6 H248.6 Z" fill="#f3d57a"/>
<rect x="248.6" y="555.8" width="17.2" height="10.8" fill="#f8de8a"/>
<path d="M251.3 560 H262.6 V566.6 H259.8 V563 H254.1 V566.6 H251.3 Z" fill="#2aa6ea"/>
<!-- chrome -->
<circle cx="296.9" cy="560" r="9.1" fill="#31a853"/>
<path d="M296.9 550.9 A9.1 9.1 0 0 1 304.8 555.5 L296.9 555.5 A4.5 4.5 0 0 0 293 557.8 L289 551.5 A9.1 9.1 0 0 1 296.9 550.9 Z" fill="#e53a2f"/>
<path d="M289 551.5 A9.1 9.1 0 0 1 296.9 550.9 A9.1 9.1 0 0 1 304.8 555.5 H296.9 A4.5 4.5 0 0 0 293 557.8 L288.6 551.8 Z" fill="#e53a2f"/>
<path d="M304.8 555.5 A9.1 9.1 0 0 1 297.5 569.1 L301 562.2 A4.5 4.5 0 0 0 301.4 557.6 Z" fill="#fbc02d"/>
<path d="M304.8 555.5 A9.1 9.1 0 0 1 296.9 569.1 L300.8 562.3 A4.5 4.5 0 0 0 296.9 555.5 Z" fill="#fbc02d"/>
<circle cx="296.9" cy="560" r="4.3" fill="#ffffff"/>
<circle cx="296.9" cy="560" r="3.4" fill="#4285f4"/>
<!-- paint -->
<ellipse cx="336" cy="560.5" rx="8.6" ry="6.8" fill="#bcdcf0" transform="rotate(-15 336 560.5)"/>
<circle cx="331" cy="561" r="1.3" fill="#e04040"/><circle cx="333.8" cy="557.7" r="1.3" fill="#50b050"/><circle cx="337.5" cy="556" r="1.3" fill="#e0a020"/><circle cx="335" cy="563" r="1.1" fill="#202020"/>
<path d="M333.5 569 L344.5 553" stroke="#d88a30" stroke-width="1.6"/>
<path d="M343.5 554.5 L346.5 551 L345 556 Z" fill="#e0b070"/>
<!-- floppy -->
<rect x="368" y="551" width="18" height="18" rx="0.8" fill="#2850d8"/>
<rect x="373" y="551.3" width="9.2" height="5.3" fill="#d8d8d8"/><rect x="379" y="552" width="2" height="3.8" fill="#2850d8"/>
<rect x="370" y="558.8" width="14" height="9.7" fill="#ffffff"/>
<path d="M371 560.8 H383 M371 562.8 H383 M371 564.8 H383 M371 566.8 H383" stroke="#e06060" stroke-width="0.6"/>
<rect x="361" y="574" width="32.7" height="2" fill="#8cc4ee"/>
<!-- webex active -->
<rect x="398" y="544" width="39.2" height="32" fill="#363636"/>
<rect x="398" y="574" width="39.2" height="2" fill="#8cc4ee"/>
<rect x="407.7" y="550.5" width="18.9" height="18.9" rx="3.5" fill="#0c0c0c"/>
<path d="M410.5 559.5 C410.5 555 414 554.5 415.5 557.5 L418 562 C419.5 565 423.5 564.5 423.5 559.5" stroke="#27a8ee" stroke-width="2.6" fill="none"/>
<path d="M410.5 559.5 C410.5 564 414 564.5 415.5 561.5 L418 557 C419.5 554 423.5 554.5 423.5 559.5" stroke="#3a5ef5" stroke-width="2.6" fill="none"/>
<path d="M421 556 C422.5 554.5 424 556 423.8 558.5" stroke="#48d058" stroke-width="2.2" fill="none"/>
<path d="M419.5 563 H428 V570 H421 L419.5 571 Z" fill="#f0f0f0"/>
<path d="M421.5 565 H425 L426 566.5 L425 568 H421.5 Z" fill="#1e9a5a"/>
<!-- tray people -->
<circle cx="721" cy="558.8" r="2.2" stroke="#e0e0e0" stroke-width="0.9" fill="none"/>
<path d="M716.5 565.8 C717 562.8 718.5 561.5 721 561.5 C723.5 561.5 725 562.8 725.5 565.8" stroke="#e0e0e0" stroke-width="0.9" fill="none"/>
<circle cx="724.8" cy="555.2" r="2.2" stroke="#e0e0e0" stroke-width="0.9" fill="none"/>
<path d="M726.8 557.3 C727.5 558 728 558.8 728.2 560.6" stroke="#e0e0e0" stroke-width="0.9" fill="none"/>
<!-- red green -->
<rect x="745.8" y="554.1" width="5.4" height="11.9" fill="#7a0000"/>
<rect x="745.8" y="564.4" width="5.4" height="1.6" fill="#e00000"/>
<rect x="751.7" y="554.1" width="5.4" height="11.9" fill="#007a10"/>
<!-- bluetooth -->
<ellipse cx="769.7" cy="560" rx="5.1" ry="7" fill="#1a86ea"/>
<path d="M767.5 557 L772 562.5 L769.7 564.8 V555.2 L772 557.5 L767.5 563" stroke="#ffffff" stroke-width="0.9" fill="none"/>
<!-- usb -->
<rect x="786.5" y="553.3" width="5" height="3.5" stroke="#d0d0d0" stroke-width="0.9" fill="none"/>
<rect x="785.5" y="556.8" width="7" height="9.2" rx="0.8" stroke="#d0d0d0" stroke-width="0.9" fill="none"/>
<path d="M792 565.5 L795.8 562" stroke="#d0d0d0" stroke-width="0.9"/>
<!-- defender shield -->
<path d="M803 555 L808.5 553.3 L814 555 V559.5 C814 563 811.5 565.5 808.5 566.5 C805.5 565.5 803 563 803 559.5 Z" fill="#f4f4f4"/>
<path d="M808.5 553.3 V566.5 M803 559.7 H814" stroke="#a0a0a0" stroke-width="0.5"/>
<circle cx="812.7" cy="564" r="3.3" fill="#e02030"/>
<path d="M811.2 562.5 L814.2 565.5 M814.2 562.5 L811.2 565.5" stroke="#fff" stroke-width="0.7"/>
<!-- wifi -->
<path d="M824 565.2 A9.5 9.5 0 0 1 833.3 556" stroke="#d8d8d8" stroke-width="0.9" fill="none"/>
<path d="M826.8 565.2 A6.6 6.6 0 0 1 833.3 558.8" stroke="#d8d8d8" stroke-width="0.9" fill="none"/>
<path d="M829.6 565.2 A3.8 3.8 0 0 1 833.3 561.6" stroke="#d8d8d8" stroke-width="0.9" fill="none"/>
<circle cx="832.3" cy="564.6" r="0.8" fill="#e8e8e8"/>
<!-- battery -->
<rect x="843" y="557.2" width="10" height="5.8" fill="#f0f0f0"/>
<rect x="843" y="557.2" width="10" height="5.8" stroke="#d0d0d0" stroke-width="0.7" fill="none"/>
<path d="M840.5 555 V558 C840.5 559.5 842 560 843 560 M842 554.5 V557" stroke="#e0e0e0" stroke-width="0.8" fill="none"/>
<!-- meter -->
<rect x="861.6" y="554" width="9.2" height="10.6" stroke="#c8c8c8" stroke-width="0.6" fill="#1a1a1a"/>
<rect x="862" y="560.5" width="8.5" height="3.9" fill="#4ab8f5"/>
<!-- speaker -->
<path d="M879.5 558 H882 L885.5 555 V565 L882 562 H879.5 Z" stroke="#d8d8d8" stroke-width="0.9" fill="none"/>
<path d="M887.3 558 A3 3 0 0 1 887.3 562 M889.3 556 A5.5 5.5 0 0 1 889.3 564" stroke="#d8d8d8" stroke-width="0.9" fill="none"/>
<!-- text -->
<text x="900.5" y="564" font-family="Liberation Sans" font-size="9.6" fill="#e8e8e8">ENG</text>
<text x="953" y="556.6" font-family="Liberation Sans" font-size="9.6" fill="#e8e8e8" text-anchor="middle">13:09</text>
<text x="952.3" y="571.3" font-family="Liberation Sans" font-size="9.6" fill="#e8e8e8" text-anchor="middle">23.06.2021</text>
<!-- notification -->
<path d="M991 553.5 H1004.2 V564 H999.3 L997.6 566 L995.9 564 H991 Z" stroke="#e0e0e0" stroke-width="0.9" fill="none"/>
<rect x="1019.6" y="544" width="1" height="32" fill="#444"/>
</svg>
</body></html>
